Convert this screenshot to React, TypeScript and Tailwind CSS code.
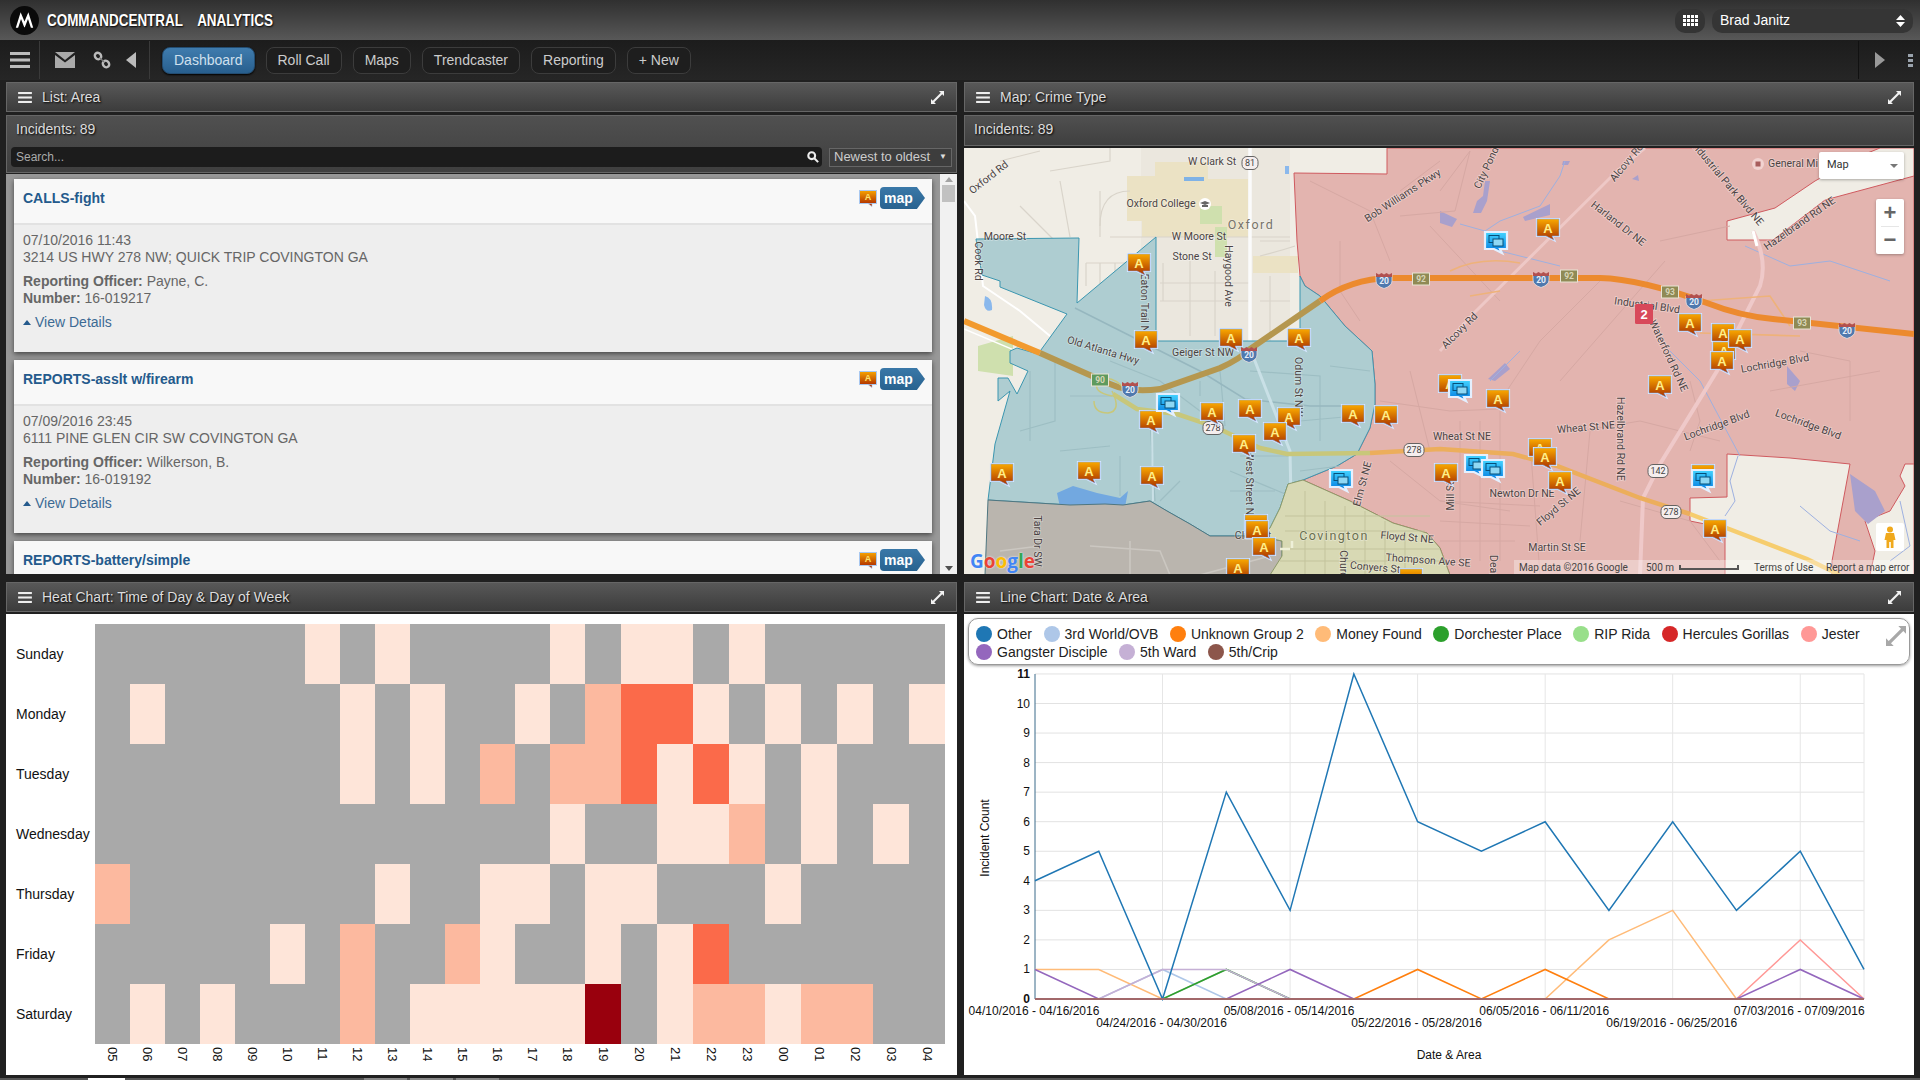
import React from 'react';

const titleShadow = '[text-shadow:1px_1px_2px_#000]';

const heatRows: { day: string; cells: number[] }[] = [
  { day: 'Sunday', cells: [0,0,0,0,0,0,1,0,1,0,0,0,0,1,0,1,1,0,1,0,0,0,0,0] },
  { day: 'Monday', cells: [0,1,0,0,0,0,0,1,0,1,0,0,1,0,2,3,3,1,0,1,0,1,0,1] },
  { day: 'Tuesday', cells: [0,0,0,0,0,0,0,1,0,1,0,2,0,2,2,3,1,3,1,0,1,0,0,0] },
  { day: 'Wednesday', cells: [0,0,0,0,0,0,0,0,0,0,0,0,0,1,0,0,1,1,2,0,1,0,1,0] },
  { day: 'Thursday', cells: [2,0,0,0,0,0,0,0,1,0,0,1,1,0,1,1,0,0,0,1,0,0,0,0] },
  { day: 'Friday', cells: [0,0,0,0,0,1,0,2,0,0,2,1,0,0,1,0,1,3,0,0,0,0,0,0] },
  { day: 'Saturday', cells: [0,1,0,1,0,0,0,2,0,1,1,1,1,1,4,0,1,2,2,1,2,2,0,0] },
];
const hours = ['05','06','07','08','09','10','11','12','13','14','15','16','17','18','19','20','21','22','23','00','01','02','03','04'];
const heatColors = ['bg-[#a9a9a9]', 'bg-[#fee5d9]', 'bg-[#fcb99f]', 'bg-[#fb6a4a]', 'bg-[#99000d]'];

const legend = [
  ['Other', 'bg-[#1f77b4]'], ['3rd World/OVB', 'bg-[#aec7e8]'], ['Unknown Group 2', 'bg-[#ff7f0e]'], ['Money Found', 'bg-[#ffbb78]'],
  ['Dorchester Place', 'bg-[#2ca02c]'], ['RIP Rida', 'bg-[#98df8a]'], ['Hercules Gorillas', 'bg-[#d62728]'], ['Jester', 'bg-[#ff9896]'],
  ['Gangster Disciple', 'bg-[#9467bd]'], ['5th Ward', 'bg-[#c5b0d5]'], ['5th/Crip', 'bg-[#8c564b]'],
];

const series: { color: string; values: number[]; width?: number }[] = [
  { color: '#c7c7c7', values: [0,0,0,1,0,0,0,0,0,0,0,0,0,0] },
  { color: '#98df8a', values: [0,0,0,0,0,0,0,0,0,0,0,0,0,0] },
  { color: '#aec7e8', values: [0,0,1,0,0,0,0,0,0,0,0,0,0,0] },
  { color: '#ffbb78', values: [1,1,0,0,0,0,0,0,0,2,3,0,0,0] },
  { color: '#2ca02c', values: [0,0,0,1,0,0,0,0,0,0,0,0,0,0] },
  { color: '#c5b0d5', values: [0,0,1,1,0,0,0,0,0,0,0,0,0,0] },
  { color: '#ff7f0e', values: [0,0,0,0,0,0,1,0,1,0,0,0,0,0] },
  { color: '#ff9896', values: [0,0,0,0,0,0,0,0,0,0,0,0,2,0] },
  { color: '#9467bd', values: [1,0,0,0,1,0,0,0,0,0,0,0,1,0] },
  { color: '#1f77b4', values: [4,5,0,7,3,11,6,5,6,3,6,3,5,1] },
  { color: '#a2686a', values: [0,0,0,0,0,0,0,0,0,0,0,0,0,0], width: 2.2 },
];

const incidents = [
  { title: 'CALLS-fight', date: '07/10/2016 11:43', address: '3214 US HWY 278 NW; QUICK TRIP COVINGTON GA', officer: 'Payne, C.', number: '16-019217' },
  { title: 'REPORTS-asslt w/firearm', date: '07/09/2016 23:45', address: '6111 PINE GLEN CIR SW COVINGTON GA', officer: 'Wilkerson, B.', number: '16-019192' },
  { title: 'REPORTS-battery/simple' },
];

const aMarkers = [
  [1256,523],[1450,383],[1540,447],[1703,473],[1139,262],[1146,339],[1231,337],[1299,337],[1548,227],[1690,322],[1723,332],[1724,350],[1722,360],[1740,338],
  [1151,419],[1212,411],[1250,408],[1289,416],[1275,431],[1244,443],[1353,413],[1386,414],[1002,472],[1089,470],[1152,475],
  [1257,529],[1264,546],[1238,567],[1411,577],[1498,398],[1660,384],[1545,456],[1446,472],[1560,480],[1715,528],
];
const msgMarkers = [[1496,240],[1168,402],[1341,478],[1460,388],[1476,463],[1493,468],[1703,478]];

const labels: [string, number, number, number][] = [
  ['Oxford Rd',989,177,-38],['W Clark St',1212,161,0],['Oxford College',1161,203,0],['W Moore St',1199,236,0],['Moore St',1005,236,0],['Stone St',1192,256,0],
  ['Cook Rd',978,260,90],['Haygood Ave',1228,275,90],['Bob Williams Pkwy',1403,195,-33],['Old Atlanta Hwy',1103,350,17],['Geiger St NW',1203,352,0],['Eaton Trail NW',1144,307,90],
  ['Odum St NW',1298,386,90],['Tara Dr SW',1037,540,90],['West Street NW',1249,487,90],['Elm St NE',1363,483,-75],['Floyd St NE',1407,537,5],['Thompson Ave SE',1428,560,4],
  ['Conyers St',1375,567,5],['Church St',1343,572,90],['Clark St',1253,535,0],['City Pond',1487,167,-65],['Alcovy Rd',1627,162,-50],['Alcovy Rd',1460,330,-45],
  ['Harland Dr NE',1618,223,38],['Industrial Park Blvd NE',1727,183,50],['General Mi',1793,163,0],['Hazelbrand Rd NE',1800,223,-35],['Industrial Blvd',1647,305,8],['Waterford Rd NE',1668,355,65],
  ['Lochridge Blvd',1775,363,-10],['Lochridge Blvd',1717,425,-20],['Lochridge Blvd',1808,424,20],['Wheat St NE',1586,427,-5],['Wheat St NE',1462,436,0],['Newton Dr NE',1522,493,0],
  ['Floyd St NE',1559,506,-40],['Martin St SE',1557,547,0],['Hazelbrand Rd NE',1620,438,90],['Mill St',1451,495,-90],['Dearing',1493,572,90],
];

const thinRoads = [
  'M1000 160 L1040 150 M1050 170 L1110 160 L1110 147 M1020 205 L1055 240 M1060 180 L1070 236 M1100 190 L1100 236 M1110 236 L1290 236',
  'M1130 190 Q1100 190 1100 225 M1160 300 L1250 300 M1160 282 L1250 282 M1163 262 L1163 300 M1190 260 L1190 335 M1215 270 L1215 335 M1260 300 L1290 300',
  'M1260 240 L1290 240 M1260 255 Q1280 250 1295 245 M1270 275 L1270 340 M1086 262 L1150 262 M1086 262 L1086 285 M1100 262 L1100 283 M1115 262 L1115 283',
];
const blueRoads = [
  'M1030 370 L1030 440 M1055 360 L1055 420 L1020 430 M1070 395 L1120 395 M1060 450 L1110 445 M1110 360 L1160 380 L1220 425 M1200 380 L1200 395',
  'M1220 370 L1225 425 M1250 370 L1320 375 L1320 440 M1240 455 L1290 455 M1230 470 L1290 495 M1230 490 L1275 490 M1300 420 L1355 415 M1330 365 L1370 370',
  'M1150 420 L1155 500 M1180 480 L1160 500 M1120 455 L1120 495 M1300 470 L1340 465',
];
const pinkRoads = [
  'M1310 180 L1370 210 L1390 260 M1340 240 L1340 290 L1360 320 M1400 190 L1440 160 M1440 190 L1470 150 L1455 210 L1400 215 M1430 225 L1500 300',
  'M1660 240 L1730 225 M1600 280 L1540 340 L1500 400 M1665 260 L1560 380 M1380 400 L1450 410 L1500 408 M1410 370 L1430 450 M1390 460 L1440 500 L1510 510',
  'M1460 420 L1460 560 M1480 420 L1480 560 M1500 410 L1500 560 M1440 500 L1540 505 M1440 520 L1530 525 M1440 540 L1515 540 M1580 430 L1640 420 L1720 440',
  'M1530 440 L1540 574 M1590 430 L1580 540 M1620 500 L1690 520 L1720 560 M1800 350 L1850 360 L1850 420 M1770 390 L1880 370 M1690 380 L1700 420 L1690 450',
];
const rivers = [
  'M1565 160 L1560 175 L1540 205 L1500 220 L1485 230 L1460 223 M1485 230 L1500 250 L1560 265 M1745 245 L1790 265 L1830 260 L1890 280 M1520 350 L1490 380',
  'M1670 350 L1700 380 L1740 455 M1738 455 L1730 480 L1735 500 L1725 515 M1800 505 L1830 530 L1860 540 M1900 500 L1910 545 L1890 560',
];

function Hamburger({ className }: { className: string }) {
  return (
    <svg viewBox="0 0 20 16" className={className} fill="currentColor">
      <rect x="0" y="0" width="20" height="3" />
      <rect x="0" y="6.5" width="20" height="3" />
      <rect x="0" y="13" width="20" height="3" />
    </svg>
  );
}

function Expand({ className }: { className: string }) {
  return (
    <svg viewBox="0 0 14 14" className={className} fill="currentColor">
      <path d="M8.6 0H14V5.4L12.1 3.5 3.5 12.1 5.4 14H0V8.6L1.9 10.5 10.5 1.9Z" />
    </svg>
  );
}

function PanelHeader({ title }: { title: string }) {
  return (
    <div className="h-[30px] flex items-center justify-between pl-[11px] pr-[12px] border border-[#666] bg-gradient-to-b from-[#585858] to-[#3c3c3c] text-[#ddd]">
      <div className="flex items-center gap-[10px]">
        <Hamburger className={'w-[14px] h-[11px] text-[#eee]'} />
        <span className={'text-[14px] ' + titleShadow}>{title}</span>
      </div>
      <Expand className="w-[13px] h-[13px] text-[#f2f2f2]" />
    </div>
  );
}

function MiniMarker() {
  return (
    <svg viewBox="0 0 18 17" className="w-[18px] h-[17px]">
      <defs>
        <linearGradient id="mini" x1="0" y1="0" x2="0" y2="1">
          <stop offset="0" stopColor="#f7a400" />
          <stop offset="1" stopColor="#b23400" />
        </linearGradient>
      </defs>
      <rect x="0.5" y="0.5" width="17" height="13" fill="url(#mini)" stroke="#a9c8f0" />
      <path d="M9 13.5 L13 13.5 L13 16.5z" fill="#b23400" stroke="#a9c8f0" strokeWidth="0.6" />
      <text x="9" y="10" textAnchor="middle" fontSize="9" fontWeight="700" fill="#ffe36e">A</text>
    </svg>
  );
}

function MapButton() {
  return (
    <div className="relative h-[22px] w-[45px] flex items-center pl-[4px] rounded-l-[4px] bg-gradient-to-b from-[#3a78a8] to-[#28628f] text-white text-[14px] font-bold [clip-path:polygon(0_0,82%_0,100%_50%,82%_100%,0_100%)]">
      map
    </div>
  );
}

function IncidentCard({ item }: { item: (typeof incidents)[number] }) {
  return (
    <div className="h-[173px] shrink-0 mb-2 bg-[#eee] shadow-[0_2px_5px_rgba(0,0,0,0.55)]">
      <div className="h-[46px] bg-[#f8f8f8] border-b-2 border-[#e2e2e2] flex justify-between pl-[9px] pr-[7px] pt-[8px]">
        <span className="text-[14px] leading-[22px] font-bold text-[#245a8c]">{item.title}</span>
        <div className="flex items-center h-[22px] gap-[3px]">
          <MiniMarker />
          <MapButton />
        </div>
      </div>
      {item.date && (
        <div className="pl-[9px] pt-[7px] text-[14px] leading-[17px] text-[#666]">
          <div>{item.date}</div>
          <div>{item.address}</div>
          <div className="mt-[7px]"><b>Reporting Officer:</b> {item.officer}</div>
          <div><b>Number:</b> {item.number}</div>
          <div className="mt-[7px] flex items-center gap-[4px] text-[#3c6a94]">
            <span className="w-0 h-0 border-x-[4px] border-x-transparent border-b-[5px] border-b-[#245a8c]" />
            View Details
          </div>
        </div>
      )}
    </div>
  );
}

function ListPanel() {
  return (
    <section className="h-[492px] flex flex-col overflow-hidden">
      <PanelHeader title="List: Area" />
      <div className="mt-[3px] h-[58px] shrink-0 border border-[#666] bg-gradient-to-b from-[#505050] to-[#3f3f3f]">
        <div className={'h-[31px] pb-[4px] pl-[9px] flex items-center text-[14px] text-[#ddd] ' + titleShadow}>Incidents: 89</div>
        <div className="flex items-center pl-1 pr-[4px] gap-[7px]">
          <div className="flex-1 h-[20px] rounded-[4px] bg-[#1c1c1c] flex items-center justify-between pl-[5px] pr-[3px] text-[12px] text-[#aaa]">
            <span>Search...</span>
            <svg viewBox="0 0 14 14" className="w-[12px] h-[12px] text-[#eee]" fill="none" stroke="currentColor" strokeWidth="2.4">
              <circle cx="5.5" cy="5.5" r="4" />
              <path d="M8.5 8.5 L13 13" />
            </svg>
          </div>
          <div className="w-[123px] h-[19px] border border-[#666] bg-[#3d3d3d] flex items-center justify-between pl-[4px] pr-[4px] text-[13px] text-[#ccc]">
            <span>Newest to oldest</span>
            <span className="text-[8px] text-[#ddd]">▼</span>
          </div>
        </div>
      </div>
      <div className="mt-[1px] flex-1 flex min-h-0 bg-[#989898]">
        <div className="flex-1 pl-2 pr-2 pt-[5px] overflow-hidden">
          {incidents.map((item) => (
            <IncidentCard key={item.title} item={item} />
          ))}
        </div>
        <div className="w-[17px] shrink-0 bg-[#f1f1f1] flex flex-col items-center pt-[3px]">
          <span className="w-0 h-0 border-x-[4px] border-x-transparent border-b-[5px] border-b-[#a3a3a3]" />
          <div className="mt-[3px] w-[13px] h-[17px] bg-[#c1c1c1]" />
          <div className="flex-1" />
          <span className="mb-[3px] w-0 h-0 border-x-[4px] border-x-transparent border-t-[5px] border-t-[#505050]" />
        </div>
      </div>
    </section>
  );
}

function AMarker({ x, y }: { x: number; y: number }) {
  return (
    <g transform={`translate(${x - 11} ${y - 9})`}>
      <path d="M0 0H22V17H15L17 21L9 17H0Z" fill="url(#orangeGrad)" stroke="#d6e6ff" strokeWidth="2.2" />
      <path d="M0 0H22V17H15L17 21L9 17H0Z" fill="url(#orangeGrad)" stroke="#7fa8ea" strokeWidth="0.5" />
      <text x="11" y="13.5" textAnchor="middle" fontSize="13" fontWeight="700" fill="#ffee88" fontFamily="Liberation Sans">A</text>
    </g>
  );
}

function MsgMarker({ x, y }: { x: number; y: number }) {
  return (
    <g transform={`translate(${x - 11} ${y - 9})`}>
      <path d="M0 0H22V17H15L17 21L9 17H0Z" fill="url(#blueGrad)" stroke="#e4f0ff" strokeWidth="2.2" />
      <rect x="4" y="3.5" width="10" height="7" fill="none" stroke="#06507a" strokeWidth="1" />
      <rect x="8" y="7" width="10" height="7" fill="#8fd8f4" stroke="#06507a" strokeWidth="1" />
    </g>
  );
}

function Interstate({ x, y }: { x: number; y: number }) {
  return (
    <g transform={`translate(${x} ${y})`}>
      <path d="M-8 -5 H8 V1 Q8 6 0 8.5 Q-8 6 -8 1 Z" fill="#4f79ae" stroke="#e8e0e0" strokeWidth="0.8" />
      <path d="M-8 -7 L-5 -5.5 L-2.5 -7 L0 -5.5 L2.5 -7 L5 -5.5 L8 -7 V-3 H-8 Z" fill="#b2504f" />
      <text y="4" textAnchor="middle" fontSize="8.5" fontWeight="700" fill="#e8eef8" fontFamily="Roboto">20</text>
    </g>
  );
}

function ExitTag({ x, y, label, green }: { x: number; y: number; label: string; green?: boolean }) {
  return (
    <g transform={`translate(${x} ${y})`}>
      <rect x="-8.5" y="-6" width="17" height="12" fill={green ? '#5e9a5e' : '#8f8a55'} stroke="#e8e4d4" strokeWidth="1" />
      <text y="3.2" textAnchor="middle" fontSize="8.5" fontWeight="700" fill="#d9d6b8" fontFamily="Roboto">{label}</text>
    </g>
  );
}

function RoadShield({ x, y, label, w }: { x: number; y: number; label: string; w: number }) {
  return (
    <g transform={`translate(${x} ${y})`}>
      <rect x={-w / 2} y="-6.5" width={w} height="13" rx="5" fill="#f5eeee" stroke="#555" strokeWidth="0.9" />
      <text y="3.4" textAnchor="middle" fontSize="9" fill="#444" fontFamily="Roboto">{label}</text>
    </g>
  );
}

function MapPanel() {
  return (
    <section className="h-[492px] flex flex-col overflow-hidden">
      <PanelHeader title="Map: Crime Type" />
      <div className={'mt-[3px] h-[31px] shrink-0 border border-[#666] bg-gradient-to-b from-[#505050] to-[#3f3f3f] pb-[2px] pl-[9px] flex items-center text-[14px] text-[#ddd] ' + titleShadow}>
        Incidents: 89
      </div>
      <div className="relative mt-[2px] flex-1 min-h-0 overflow-hidden bg-[#f0ede5]">
        <svg viewBox="964 147 950 427" className="block w-[950px] h-[427px]">
          <defs>
            <linearGradient id="orangeGrad" x1="0" y1="0" x2="0" y2="1">
              <stop offset="0" stopColor="#f9a800" />
              <stop offset="1" stopColor="#a83000" />
            </linearGradient>
            <linearGradient id="blueGrad" x1="0" y1="0" x2="0" y2="1">
              <stop offset="0" stopColor="#44d4ff" />
              <stop offset="1" stopColor="#0078e0" />
            </linearGradient>
          </defs>
          <path d="M1141 147 H1290 V340 H1141 Z" fill="#ebe7de" />
          <path d="M1155 161 H1208 V178 H1248 V236 H1142 V220 H1127 V175 H1155 Z" fill="#ebe2c4" />
          <rect x="1253" y="255" width="45" height="17" fill="#ebe2c4" />
          <path d="M1200 205 h22 v18 h-22z M1215 226 h12 v30 h-12z M978 345 l35 -10 v40 l-35 -5z" fill="#cfe0ae" />
          <path d="M1184 176 h20 v4 h-20z" fill="#7fb2e6" />
          <path d="M1285 165 h4 v8 h-4z M985 295 q8 2 7 14 q-6 3 -8 -5z" fill="#8ab8ec" />
          <g fill="none" stroke="#d9d4ca" strokeWidth="1.2">
            {thinRoads.map((d) => <path key={d} d={d} />)}
          </g>
          <path d="M964 200 L975 215 L983 285 L1020 310 L1050 335" fill="none" stroke="#fff" strokeWidth="2" />
          <path d="M1250 147 V345" stroke="#fbfbfb" strokeWidth="3.5" fill="none" />
          <path d="M964 328 L1040 360" stroke="#fff" strokeWidth="1.5" fill="none" />

          <path d="M1294 172 L1387 173 L1387 147 L1914 147 L1914 574 L1450 574 L1440 547 L1427 532 L1393 522 L1350 500 L1303 479 L1337 465 L1357 453 L1370 427 L1375 403 L1375 383 L1372 350 L1345 325 L1320 295 L1305 285 L1300 275 L1297 240 Z" fill="#e3b4af" stroke="#cf5a5f" strokeWidth="1" />
          <path d="M1727 220 L1775 207 L1815 180 L1860 155 L1880 147 L1914 147 L1914 175 L1825 199 L1773 239 L1727 239 Z" fill="#f0ede5" stroke="#cf5a5f" strokeWidth="1" />
          <path d="M1727 453 L1790 457 L1850 463 L1832 560 L1832 574 L1725 574 L1725 560 L1725 527 L1690 520 L1690 497 L1727 496 Z" fill="#f0ede5" stroke="#cf5a5f" strokeWidth="1" />
          <path d="M1914 463 L1905 463 L1900 475 L1905 485 L1890 510 L1865 520 L1875 550 L1870 574 L1914 574 Z" fill="#f0ede5" stroke="#cf5a5f" strokeWidth="1" />
          <path d="M1440 210 L1457 218 L1452 226 L1440 222 Z M1473 212 l4 -12 l6 -5 l2 -15 l5 0 l-3 20 l-6 12z M1523 216 L1550 203 L1550 214 L1525 220Z M1488 378 L1505 362 L1510 368 L1495 380Z M1787 365 L1800 380 L1795 390 L1787 383Z M1850 473 L1875 490 L1885 510 L1868 523 L1855 510Z M1563 160 h7 l-2 4 h-6z M1632 178 l6 -4 l1 6z" fill="#a9a0cc" />
          <g fill="none" stroke="#d6a8a3" strokeWidth="1">
            {pinkRoads.map((d) => <path key={d} d={d} />)}
          </g>
          <g fill="none" stroke="#9db0e0" strokeWidth="1">
            {rivers.map((d) => <path key={d} d={d} />)}
          </g>
          <path d="M1440 350 L1473 313 L1617 170 L1645 147" stroke="#eec8c6" strokeWidth="3" fill="none" />
          <path d="M1753 230 Q1768 260 1760 285 L1717 370 L1660 463 L1643 497 L1640 574" stroke="#efc9c9" strokeWidth="4" fill="none" />
          <path d="M1753 230 L1757 245" stroke="#fff" strokeWidth="3" fill="none" />
          <path d="M1450 270 Q1480 255 1520 262 M1470 295 L1500 290 M1700 300 L1770 295 L1790 325 M1700 332 L1800 335" stroke="#eeb27a" strokeWidth="1.6" fill="none" />

          <path d="M976 238 L1079 237 L1077 302 L1156 236 L1156 340 L1300 340 L1300 275 L1305 285 L1320 295 L1345 325 L1372 350 L1375 383 L1375 403 L1370 427 L1357 453 L1337 465 L1303 479 L1288 483 L1280 507 L1270 527 L1260 535 L1210 535 L1190 523 L1167 510 L1150 500 L1123 504 L1105 503 L1070 504 L988 499 L995 443 L1010 390 L998 400 L998 377 L1008 377 L1017 393 L1028 370 L1010 362 L1010 350 L1017 347 L1038 353 L1067 313 L1000 286 L1000 280 L982 274 Z" fill="#aecdd1" stroke="#3b96b0" strokeWidth="1" />
          <path d="M1057 492 L1073 485 L1097 492 L1120 497 L1128 490 L1123 517 L1117 513 L1087 504 L1065 530 Z" fill="#72a8e0" />
          <g fill="none" stroke="#9dbec3" strokeWidth="1.2">
            {blueRoads.map((d) => <path key={d} d={d} />)}
          </g>
          <path d="M1075 307 L1200 370 L1245 398 L1310 405 L1355 405" stroke="#96b7bf" strokeWidth="1.5" fill="none" />
          <path d="M1253 355 L1290 450 L1292 547" stroke="#c9e0e6" strokeWidth="3" fill="none" />
          <path d="M1152 425 L1153 500" stroke="#c9e0e6" strokeWidth="2" fill="none" />
          <path d="M988 499 L1070 504 L1105 503 L1123 504 L1150 500 L1167 510 L1190 523 L1210 535 L1260 535 L1282 540 L1282 563 L1270 574 L985 574 Z" fill="#bab5ae" stroke="#4f7680" strokeWidth="1" />
          <path d="M1303 479 L1350 500 L1393 522 L1427 532 L1440 547 L1450 574 L1270 574 L1282 555 L1282 540 L1260 535 L1270 527 L1280 507 L1288 483 Z" fill="#d8d9b4" stroke="#8d9a6a" strokeWidth="1" />
          <g fill="none" stroke="#c3c39c" strokeWidth="1">
            <path d="M1285 515 H1430 M1285 530 H1425 M1280 548 H1440 M1280 560 H1445 M1305 490 V574 M1325 500 V574 M1345 505 V574 M1365 510 V574 M1385 520 V574 M1405 530 V574" />
          </g>
          <path d="M1280 548 H1290 M1292 547 L1292 540" stroke="#eef0d8" strokeWidth="2.5" fill="none" />
          <path d="M1130 540 L1130 574 M1090 545 L1160 550 L1170 574 M1040 545 L1000 550 M1200 574 L1270 555" stroke="#cbc7c1" strokeWidth="1.6" fill="none" />

          <path d="M1040 352 L1110 383 Q1130 392 1160 388 L1220 367 Q1240 358 1250 348 L1320 300" stroke="#b5974f" strokeWidth="6" fill="none" />
          <path d="M964 320 L1040 352" stroke="#f29a2e" strokeWidth="6" fill="none" />
          <path d="M1320 300 Q1350 278 1390 277 L1600 277 Q1640 278 1707 302 Q1740 315 1773 318 L1914 333" stroke="#ec8a2e" strokeWidth="6" fill="none" />
          <path d="M1113 393 L1137 408 L1177 413 L1213 425 L1260 447 L1287 453 L1370 452" stroke="#c8c77a" strokeWidth="4.5" fill="none" />
          <path d="M1370 452 L1440 448 L1513 453 L1557 465 L1640 497 L1690 513" stroke="#ecae5c" strokeWidth="4.5" fill="none" />
          <path d="M1690 513 L1807 558 L1840 574" stroke="#f6cd6e" strokeWidth="4.5" fill="none" />
          <path d="M1112 395 q-20 -4 -14 -14 q12 -10 28 8 M1112 390 q10 20 -4 22 q-14 0 -14 -12" stroke="#c8c77a" strokeWidth="1.5" fill="none" />

          <Interstate x={1249} y={353} />
          <Interstate x={1384} y={279} />
          <Interstate x={1130} y={388} />
          <Interstate x={1541} y={278} />
          <Interstate x={1694} y={300} />
          <Interstate x={1847} y={329} />
          <ExitTag x={1421} y={278} label="92" />
          <ExitTag x={1569} y={275} label="92" />
          <ExitTag x={1670} y={291} label="93" />
          <ExitTag x={1802} y={322} label="93" />
          <ExitTag x={1100} y={379} label="90" green />
          <RoadShield x={1213} y={427} label="278" w={20} />
          <RoadShield x={1414} y={449} label="278" w={20} />
          <RoadShield x={1671} y={511} label="278" w={20} />
          <RoadShield x={1250} y={162} label="81" w={16} />
          <RoadShield x={1658} y={470} label="142" w={20} />

          <g fontFamily="Roboto" fontSize="10.5" fill="#4c4444" stroke="rgba(255,255,255,0.35)" strokeWidth="1.6" paintOrder="stroke">
            {labels.map(([text, x, y, rot]) => (
              <text key={`${text}${x}`} x={x} y={y} textAnchor="middle" dominantBaseline="middle" transform={`rotate(${rot} ${x} ${y})`}>{text}</text>
            ))}
            <text x="1251" y="225" textAnchor="middle" dominantBaseline="middle" fontSize="12.5" letterSpacing="1.5" fill="#77736a">Oxford</text>
            <text x="1334" y="536" textAnchor="middle" dominantBaseline="middle" fontSize="12.5" letterSpacing="1.5" fill="#6a6f50">Covington</text>
          </g>
          <circle cx="1205" cy="203" r="6" fill="#fff" />
          <path d="M1200 202 l5 -2 l5 2 l-5 2z M1202 204 h6 v2 h-6z" fill="#666" />
          <circle cx="1758" cy="163" r="6" fill="#f1d2d0" />
          <rect x="1755.5" y="160.5" width="5" height="5" fill="#a85d5d" />

          {aMarkers.map(([x, y]) => <AMarker key={`${x}-${y}`} x={x} y={y} />)}
          {msgMarkers.map(([x, y]) => <MsgMarker key={`${x}-${y}`} x={x} y={y} />)}
          <rect x="1635" y="303" width="18" height="20" rx="1.5" fill="#d8495a" />
          <text x="1644" y="318" textAnchor="middle" fontSize="13" fontWeight="700" fill="#fff" fontFamily="Liberation Sans">2</text>
        </svg>

        <div className="absolute left-[855px] top-[4px] w-[85px] h-[27px] bg-white rounded-[2px] shadow-[0_1px_3px_rgba(0,0,0,0.3)] flex items-center justify-between pl-2 pr-[6px] text-[11px] text-[#333] [font-family:Roboto,sans-serif]">
          Map
          <span className="w-0 h-0 border-x-[4px] border-x-transparent border-t-[4px] border-t-[#777]" />
        </div>
        <div className="absolute left-[912px] top-[51px] w-[28px] h-[55px] bg-white rounded-[2px] shadow-[0_1px_3px_rgba(0,0,0,0.3)] flex flex-col items-center justify-center text-[#666]">
          <span className="text-[22px] leading-[26px] font-bold">+</span>
          <span className="w-[18px] h-px bg-[#e6e6e6]" />
          <span className="text-[22px] leading-[26px] font-bold">−</span>
        </div>
        <div className="absolute left-[912px] top-[375px] w-[28px] h-[28px] bg-white rounded-[2px] flex items-center justify-center">
          <svg viewBox="0 0 12 22" className="w-[12px] h-[22px]" fill="#f0a91c">
            <circle cx="6" cy="3.5" r="3" />
            <path d="M2 7 H10 L11.5 14 H9.5 V22 H6.8 V16 H5.2 V22 H2.5 V14 H0.5Z" />
          </svg>
        </div>
        <div className="absolute left-[6px] bottom-[1px] text-[19px] leading-[24px] font-bold [font-family:'Open_Sans',sans-serif] [text-shadow:0_0_2px_#fff]">
          <span className="text-[#4285f4]">G</span>
          <span className="text-[#ea4335]">o</span>
          <span className="text-[#fbbc05]">o</span>
          <span className="text-[#4285f4]">g</span>
          <span className="text-[#34a853]">l</span>
          <span className="text-[#ea4335]">e</span>
        </div>
        <div className="absolute right-0 bottom-0 h-[14px] w-[400px] flex items-center bg-[#ffffff55] text-[10px] text-[#444] [font-family:Roboto,sans-serif]">
          <span className="pl-[5px] w-[127px]">Map data ©2016 Google</span>
          <span className="pl-[5px] w-[112px] flex items-center gap-[5px]">
            500 m
            <span className="w-[60px] h-[5px] border-x-2 border-b-2 border-[#555]" />
          </span>
          <span className="pl-[1px] w-[72px]">Terms of Use</span>
          <span className="pl-[1px]">Report a map error</span>
        </div>
      </div>
    </section>
  );
}

function HeatPanel() {
  return (
    <section className="h-[493px] flex flex-col overflow-hidden">
      <PanelHeader title="Heat Chart: Time of Day & Day of Week" />
      <div className="mt-[2px] flex-1 bg-white pt-[10px] pl-[10px]">
        <div className="w-[930px] grid grid-cols-[79px_repeat(14,35px)_repeat(10,36px)] grid-rows-[repeat(7,60px)_auto]">
          {heatRows.map((row) => (
            <React.Fragment key={row.day}>
              <div className="flex items-center text-[14px] text-[#111]">{row.day}</div>
              {row.cells.map((level, i) => (
                <div key={i} className={heatColors[level]} />
              ))}
            </React.Fragment>
          ))}
          <div />
          {hours.map((h) => (
            <div key={h} className="flex justify-center pt-[3px]">
              <span className="[writing-mode:vertical-rl] text-[13px] leading-none text-[#111]">{h}</span>
            </div>
          ))}
        </div>
      </div>
    </section>
  );
}

const plotX = (i: number) => 1035 + i * 63.77;
const plotY = (v: number) => 999 - v * 29.55;
const dateLabels = [
  ['04/10/2016 - 04/16/2016', 0], ['04/24/2016 - 04/30/2016', 2], ['05/08/2016 - 05/14/2016', 4], ['05/22/2016 - 05/28/2016', 6],
  ['06/05/2016 - 06/11/2016', 8], ['06/19/2016 - 06/25/2016', 10], ['07/03/2016 - 07/09/2016', 12],
] as const;

function LinePanel() {
  return (
    <section className="h-[493px] flex flex-col overflow-hidden">
      <PanelHeader title="Line Chart: Date & Area" />
      <div className="mt-[2px] flex-1 flex flex-col bg-white pt-1">
        <div className="relative mx-1 h-[47px] shrink-0 rounded-[10px] border border-[#999] shadow-[0_1px_3px_rgba(0,0,0,0.4)] pl-[7px] pt-[6px] pr-[40px] flex flex-wrap content-start gap-x-[11.5px] text-[14px] leading-[18px] text-[#222]">
          {legend.map(([name, color]) => (
            <div key={name} className="flex items-center gap-[5px]">
              <span className={'w-4 h-4 rounded-full ' + color} />
              {name}
            </div>
          ))}
          <Expand className="absolute right-[3px] top-[7px] w-[20px] h-[20px] text-[#a8a8a8]" />
        </div>
        <svg viewBox="964 665 950 410" className="block w-[950px] h-[410px]" fontFamily="Liberation Sans" fontSize="12">
          {Array.from({ length: 12 }, (_, v) => (
            <g key={v}>
              <line x1="1035" x2="1864" y1={plotY(v)} y2={plotY(v)} stroke="#e2e2e2" />
              <text x="1030" y={plotY(v) + 4} textAnchor="end" fill="#111" fontWeight={v === 11 || v === 0 ? 700 : 400}>{v}</text>
            </g>
          ))}
          {[2, 4, 6, 8, 10, 12, 13].map((i) => (
            <line key={i} x1={plotX(i)} x2={plotX(i)} y1="674" y2="999" stroke="#e6e6e6" />
          ))}
          <line x1="1035" x2="1035" y1="674" y2="999" stroke="#3a6a8a" />
          {series.map((s, k) => (
            <polyline
              key={k}
              points={s.values.map((v, i) => `${plotX(i)},${plotY(v)}`).join(' ')}
              fill="none"
              stroke={s.color}
              strokeWidth={s.width ?? 1.5}
            />
          ))}
          {dateLabels.map(([label, i]) => (
            <text key={label} x={plotX(i) - 1} y={i % 4 === 0 ? 1015 : 1027} textAnchor="middle" fill="#111">{label}</text>
          ))}
          <text x="1449" y="1059" textAnchor="middle" fill="#111">Date &amp; Area</text>
          <text x="989" y="838" textAnchor="middle" fill="#111" transform="rotate(-90 989 838)">Incident Count</text>
        </svg>
      </div>
    </section>
  );
}

function NavButton({ label, active }: { label: string; active?: boolean }) {
  return (
    <div
      className={
        active
          ? 'h-[27px] px-[11px] flex items-center rounded-[8px] bg-gradient-to-b from-[#3f7cae] to-[#285f8e] border border-[#234d72] shadow-[0_1px_2px_#000] text-[#cfe0ee] text-[14px]'
          : 'h-[27px] px-[11px] flex items-center rounded-[8px] bg-[#1e1e1e] border border-[#3c3c3c] text-[#ccc] text-[14px]'
      }
    >
      {label}
    </div>
  );
}

export default function App() {
  return (
    <div className="w-[1920px] h-[1080px] overflow-hidden bg-[#202020] [font-family:'Liberation_Sans',Arial,sans-serif]">
      <header className="h-10 pt-px flex items-center justify-between pl-[10px] pr-[7px] bg-gradient-to-b from-[#303030] to-[#585858]">
        <div className="flex items-center gap-2">
          <svg viewBox="0 0 30 30" className="w-[29px] h-[29px]">
            <circle cx="15" cy="15" r="15" fill="#0a0a0a" />
            <path d="M6 22.5 L11 6.5 L15 16 L19 6.5 L24 22.5 L21.6 22.5 L18.6 13.5 L15.3 22 H14.7 L11.4 13.5 L8.4 22.5 Z" fill="#fff" />
          </svg>
          <div className={'text-white font-bold text-[16.5px] whitespace-pre origin-left scale-x-[0.815] ' + titleShadow}>
            COMMANDCENTRAL    ANALYTICS
          </div>
        </div>
        <div className="flex items-center gap-[7px]">
          <div className="w-[30px] h-6 rounded-[10px] bg-[#343434] flex items-center justify-center">
            <svg viewBox="0 0 15 11" className="w-[15px] h-[11px]" fill="#fff">
              {[0, 4, 8].map((y) => [0, 4, 8, 12].map((x) => <rect key={`${x}${y}`} x={x} y={y} width="3" height="3" />))}
            </svg>
          </div>
          <div className="w-[201px] h-6 rounded-[10px] bg-[#353535] flex items-center justify-between pl-2 pr-2 text-[14px] text-white">
            Brad Janitz
            <svg viewBox="0 0 9 12" className="w-[9px] h-[12px]" fill="#fff">
              <path d="M4.5 0 L9 5 H0Z M4.5 12 L0 7 H9Z" />
            </svg>
          </div>
        </div>
      </header>

      <nav className="h-10 flex items-center bg-gradient-to-b from-[#1c1c1c] to-[#262626]">
        <div className="w-[40px] h-[38px] flex items-center pl-[10px] border-r border-[#3a3a3a]">
          <Hamburger className="w-[20px] h-[16px] text-[#bbb]" />
        </div>
        <div className="w-[110px] h-[38px] flex items-center pl-[15px] gap-[18px] border-r border-[#3a3a3a]">
          <svg viewBox="0 0 20 16" className="w-[20px] h-[16px]" fill="#aaa">
            <path d="M0 0 H20 L10 8Z M0 3 L10 10.5 L20 3 V16 H0Z" />
          </svg>
          <svg viewBox="0 0 18 18" className="w-[18px] h-[18px]" fill="none" stroke="#bbb" strokeWidth="2.4">
            <ellipse cx="5" cy="5" rx="3.4" ry="3" transform="rotate(45 5 5)" />
            <ellipse cx="13" cy="13" rx="3.4" ry="3" transform="rotate(45 13 13)" />
            <path d="M7 7 L11 11" stroke="#777" strokeWidth="1.5" />
          </svg>
          <span className="w-0 h-0 -ml-[3px] border-y-[8px] border-y-transparent border-r-[10px] border-r-[#bbb]" />
        </div>
        <div className="flex items-center gap-[11px] pl-[12px]">
          <NavButton label="Dashboard" active />
          <NavButton label="Roll Call" />
          <NavButton label="Maps" />
          <NavButton label="Trendcaster" />
          <NavButton label="Reporting" />
          <NavButton label="+ New" />
        </div>
        <div className="ml-auto w-[62px] h-[38px] flex items-center border-l border-[#111]">
          <span className="ml-[16px] w-0 h-0 border-y-[8px] border-y-transparent border-l-[10px] border-l-[#999]" />
          <div className="ml-[23px] flex flex-col gap-[2px]">
            <span className="w-[5px] h-[3px] bg-[#9aa3ad]" />
            <span className="w-[5px] h-[3px] bg-[#9aa3ad]" />
            <span className="w-[5px] h-[3px] bg-[#9aa3ad]" />
          </div>
        </div>
      </nav>

      <main className="pt-[2px] px-[6px] grid grid-cols-[951px_950px] gap-x-[7px] gap-y-2">
        <ListPanel />
        <MapPanel />
        <HeatPanel />
        <LinePanel />
      </main>
      <div className="mt-[3px] h-[2px] flex bg-[#555]">
        <span className="ml-[88px] w-[37px] bg-white" />
        <span className="ml-[239px] w-[43px] bg-[#888]" />
        <span className="ml-[3px] w-[43px] bg-[#888]" />
        <span className="ml-[3px] w-[43px] bg-[#888]" />
      </div>
    </div>
  );
}
